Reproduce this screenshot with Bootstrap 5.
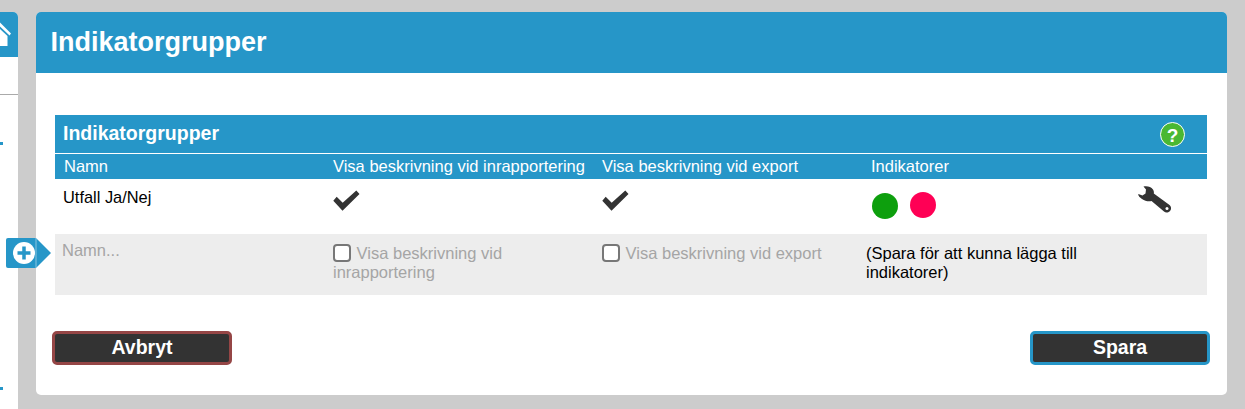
<!DOCTYPE html>
<html lang="sv">
<head>
    <meta charset="UTF-8">
    <meta name="viewport" content="width=device-width, initial-scale=1.0">
    <title>Indikatorgrupper</title>
    <link href="https://cdn.jsdelivr.net/npm/bootstrap@5.3.0/dist/css/bootstrap.min.css" rel="stylesheet">
    <style>
        html, body { height: 100%; }
        body { background: #ccc; font-family: "Liberation Sans", Arial, sans-serif; overflow: hidden; }
        .page-wrap { height: 409px; padding-top: 12px; gap: 18px; }
        .side-bar { width: 18px; background: #fff; border-top-right-radius: 5px; flex: none; }
        .side-head { height: 45px; background: #2696c8; border-top-right-radius: 5px; overflow: hidden; }
        .side-head svg { display: block; }
        .side-line { height: 1px; background: #aaa; margin-top: 37px; }
        .side-tick { width: 3px; height: 3px; background: #2696c8; }
        .tick-one { margin-top: 47px; }
        .tick-two { margin-top: 242px; }
        .main-panel { width: 1191px; height: 383px; background: #fff; border-radius: 5px; position: relative; flex: none; }
        .panel-head { height: 61px; background: #2696c8; color: #fff; border-radius: 5px 5px 0 0; padding: 0 14.500px; font-size: 27px; font-weight: 700; }
        .panel-body { padding: 42px 20px 0 19px; }
        .group-title { height: 38px; background: #2696c8; color: #fff; font-size: 19.500px; font-weight: 700; padding: 0 22px 0 8px; }
        .group-table { table-layout: fixed; width: 1152px; font-size: 16.400px; border-collapse: collapse; }
        .group-table th { background: #2696c8; color: #fff; font-weight: 400; font-size: 16.500px; height: 25px; padding: 0 0 0 8px; border-top: 1px solid #fff; vertical-align: middle; }
        .group-table th:first-child { padding-left: 9px; }
        .group-table td { padding: 0 8px; vertical-align: top; }
        .row-saved td { height: 55px; padding-top: 8px; color: #000; }
        .row-saved td:first-child { padding-top: 6px; }
        .row-saved td.tool-cell { padding: 7px 0 0 5px; }
        .row-new td { height: 61px; background: #ededed; color: #a5a5a5; font-size: 16.500px; line-height: 19px; padding-top: 10px; }
        .row-new td:first-child { padding-left: 7px; padding-top: 7.500px; }
        .row-new td.info-cell { color: #000; font-size: 16.500px; padding-left: 3px; padding-top: 10px; }
        .fake-check { display: inline-block; width: 18px; height: 18px; border: 2px solid #777; border-radius: 4px; background: #fff; vertical-align: -3px; margin-right: 1px; }
        .dot-status { display: inline-block; width: 26px; height: 26px; border-radius: 50%; }
        .dot-green { background: #0d9f0d; margin-top: 1px; }
        .dot-red { background: #ff0055; }
        .dots-row { gap: 12px; margin: 5px 0 0 1px; }
        .foot-row { padding: 36px 17px 0 16px; }
        .act-btn { width: 180px; height: 34px; background: #333; color: #fff; font-weight: 700; font-size: 19.500px; border-width: 3px; border-style: solid; border-radius: 5px; padding: 0; line-height: 1; }
        .act-cancel { border-color: #954646; }
        .act-save { border-color: #2696c8; }
        .act-btn:hover { background: #333; color: #fff; }
        .add-tab { position: absolute; left: -30px; top: 226px; width: 45px; height: 30px; }
    </style>
</head>
<body>
    <div class="page-wrap d-flex">
        <div class="side-bar">
            <div class="side-head">
                <svg width="18" height="45" viewBox="0 0 18 45"><path d="M0 10.500 11 21.500 9.500 23.500 0 14.500z" fill="#fff"/><path d="M0 17 7.500 24V34H0z" fill="#fff"/></svg>
            </div>
            <div class="side-line"></div>
            <div class="side-tick tick-one"></div>
            <div class="side-tick tick-two"></div>
        </div>

        <div class="main-panel">
            <div class="panel-head d-flex align-items-center">Indikatorgrupper</div>
            <div class="panel-body">
                <div class="group-title d-flex align-items-center justify-content-between">
                    <span>Indikatorgrupper</span>
                    <svg width="25" height="25" viewBox="0 0 25 25"><circle cx="12.500" cy="12.500" r="12" fill="#4ab832" stroke="#fff" stroke-width="1"/><text x="12.500" y="19.500" text-anchor="middle" font-family="Liberation Sans" font-weight="700" font-size="19" fill="#fff">?</text></svg>
                </div>
                <table class="group-table">
                    <colgroup>
                        <col style="width:270px"><col style="width:269px"><col style="width:269px"><col style="width:269px"><col>
                    </colgroup>
                    <thead>
                        <tr>
                            <th>Namn</th>
                            <th>Visa beskrivning vid inrapportering</th>
                            <th>Visa beskrivning vid export</th>
                            <th>Indikatorer</th>
                            <th></th>
                        </tr>
                    </thead>
                    <tbody>
                        <tr class="row-saved">
                            <td>Utfall Ja/Nej</td>
                            <td><svg width="27" height="26" viewBox="0 0 27 26"><path d="M3.700 9.700 9.700 15.700 23.300 3.500 26.500 7 9.500 23.700.3 13.700z" fill="#333"/></svg></td>
                            <td><svg width="27" height="26" viewBox="0 0 27 26"><path d="M3.700 9.700 9.700 15.700 23.300 3.500 26.500 7 9.500 23.700.3 13.700z" fill="#333"/></svg></td>
                            <td><div class="dots-row d-flex"><span class="dot-status dot-green"></span><span class="dot-status dot-red"></span></div></td>
                            <td class="tool-cell"><svg width="36" height="28" viewBox="0 0 36 28"><path d="M6.500.5C10-.2 14 .5 16 3.500c1 1.500 1 3 .8 4L32.500 19c2 1.500 2 4.500.3 6.200-1.800 1.800-4.300 1.800-5.800.3L14.500 15c-3 .8-6.500 0-9.500-2C2.500 11 1 9.500 1.300 8L5.500 9.500 8.500 7.500 9 3.500z" fill="#333"/><circle cx="30" cy="22.500" r="1.500" fill="#fff"/></svg></td>
                        </tr>
                        <tr class="row-new">
                            <td>Namn...</td>
                            <td><span class="fake-check"></span> Visa beskrivning vid inrapportering</td>
                            <td><span class="fake-check"></span> Visa beskrivning vid export</td>
                            <td class="info-cell" colspan="2"><div class="w-75">(Spara för att kunna lägga till indikatorer)</div></td>
                        </tr>
                    </tbody>
                </table>
            </div>
            <div class="foot-row d-flex justify-content-between">
                <button type="button" class="btn act-btn act-cancel">Avbryt</button>
                <button type="button" class="btn act-btn act-save">Spara</button>
            </div>
            <div class="add-tab">
                <svg width="45" height="30" viewBox="0 0 45 30"><path d="M2 0H30L45 15 30 30H2a2 2 0 0 1-2-2V2a2 2 0 0 1 2-2z" fill="#2696c8"/><path d="M30 0v30" stroke="#cfe6f1" stroke-width=".6"/><circle cx="18" cy="15" r="11" fill="#fff"/><path d="M18 8.500v13M11.500 15h13" stroke="#2696c8" stroke-width="3.500"/></svg>
            </div>
        </div>
    </div>
</body>
</html>
